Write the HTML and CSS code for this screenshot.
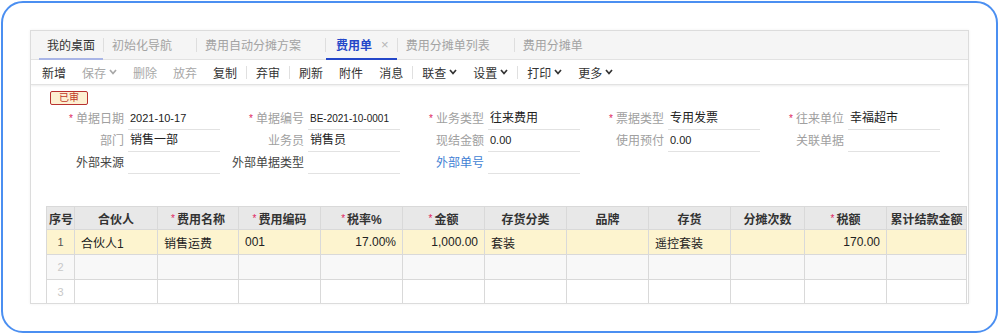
FILE: index.html
```html
<!DOCTYPE html>
<html lang="zh-CN">
<head>
    <meta charset="UTF-8">
    <title>费用单</title>
    <link rel="stylesheet" href="styles.css">
</head>
<body>
<div class="frame">
    <div class="panel">
        <div class="tabs">
            <div class="tab tab-home">我的桌面</div>
            <span class="tab-sep"></span>
            <div class="tab">初始化导航</div>
            <span class="tab-sep"></span>
            <div class="tab">费用自动分摊方案</div>
            <span class="tab-sep"></span>
            <div class="tab tab-active">费用单<span class="tab-close">×</span></div>
            <span class="tab-sep"></span>
            <div class="tab">费用分摊单列表</div>
            <span class="tab-sep"></span>
            <div class="tab">费用分摊单</div>
        </div>

        <div class="toolbar">
            <span class="tool">新增</span>
            <span class="tool off">保存<svg class="caret" width="8" height="6" viewBox="0 0 8 6"><polyline points="1,1 4,4.5 7,1"/></svg></span>
            <span class="tool off">删除</span>
            <span class="tool off">放弃</span>
            <span class="tool">复制</span>
            <span class="tool-sep"></span>
            <span class="tool">弃审</span>
            <span class="tool-sep"></span>
            <span class="tool">刷新</span>
            <span class="tool">附件</span>
            <span class="tool">消息</span>
            <span class="tool-sep"></span>
            <span class="tool">联查<svg class="caret" width="8" height="6" viewBox="0 0 8 6"><polyline points="1,1 4,4.5 7,1"/></svg></span>
            <span class="tool">设置<svg class="caret" width="8" height="6" viewBox="0 0 8 6"><polyline points="1,1 4,4.5 7,1"/></svg></span>
            <span class="tool-sep"></span>
            <span class="tool">打印<svg class="caret" width="8" height="6" viewBox="0 0 8 6"><polyline points="1,1 4,4.5 7,1"/></svg></span>
            <span class="tool">更多<svg class="caret" width="8" height="6" viewBox="0 0 8 6"><polyline points="1,1 4,4.5 7,1"/></svg></span>
        </div>

        <div class="content">
            <div class="badge">已审</div>

            <div class="form">
                <div class="form-row">
                    <div class="field"><label class="req">单据日期</label><div class="input num">2021-10-17</div></div>
                    <div class="field"><label class="req">单据编号</label><div class="input num small">BE-2021-10-0001</div></div>
                    <div class="field"><label class="req">业务类型</label><div class="input">往来费用</div></div>
                    <div class="field"><label class="req">票据类型</label><div class="input">专用发票</div></div>
                    <div class="field"><label class="req">往来单位</label><div class="input">幸福超市</div></div>
                </div>
                <div class="form-row">
                    <div class="field"><label>部门</label><div class="input">销售一部</div></div>
                    <div class="field"><label>业务员</label><div class="input">销售员</div></div>
                    <div class="field"><label>现结金额</label><div class="input num">0.00</div></div>
                    <div class="field"><label>使用预付</label><div class="input num">0.00</div></div>
                    <div class="field"><label>关联单据</label><div class="input"></div></div>
                </div>
                <div class="form-row">
                    <div class="field"><label class="dark">外部来源</label><div class="input"></div></div>
                    <div class="field"><label class="dark">外部单据类型</label><div class="input"></div></div>
                    <div class="field"><label class="link">外部单号</label><div class="input"></div></div>
                </div>
            </div>

            <table class="grid">
                <colgroup>
                    <col style="width:28px"><col style="width:83px"><col style="width:81px"><col style="width:82px">
                    <col style="width:82px"><col style="width:82px"><col style="width:82px"><col style="width:82px">
                    <col style="width:82px"><col style="width:74px"><col style="width:82px"><col style="width:80px">
                </colgroup>
                <thead>
                    <tr>
                        <th>序号</th>
                        <th>合伙人</th>
                        <th><i>*</i>费用名称</th>
                        <th><i>*</i>费用编码</th>
                        <th><i>*</i>税率%</th>
                        <th><i>*</i>金额</th>
                        <th>存货分类</th>
                        <th>品牌</th>
                        <th>存货</th>
                        <th>分摊次数</th>
                        <th><i>*</i>税额</th>
                        <th>累计结款金额</th>
                    </tr>
                </thead>
                <tbody>
                    <tr class="row-sel">
                        <td class="idx">1</td>
                        <td>合伙人1</td>
                        <td>销售运费</td>
                        <td>001</td>
                        <td class="r">17.00%</td>
                        <td class="r">1,000.00</td>
                        <td>套装</td>
                        <td></td>
                        <td>遥控套装</td>
                        <td></td>
                        <td class="r">170.00</td>
                        <td></td>
                    </tr>
                    <tr class="row-alt">
                        <td class="idx">2</td>
                        <td></td><td></td><td></td><td></td><td></td><td></td><td></td><td></td><td></td><td></td><td></td>
                    </tr>
                    <tr>
                        <td class="idx">3</td>
                        <td></td><td></td><td></td><td></td><td></td><td></td><td></td><td></td><td></td><td></td><td></td>
                    </tr>
                </tbody>
            </table>
        </div>
    </div>
</div>
</body>
</html>
```

FILE: styles.css
```css
body {
    margin: 0;
    background: #fff;
    font-family: "Liberation Sans", "Noto Sans CJK SC", sans-serif;
    font-size: 12px;
    color: #333;
}
.frame {
    box-sizing: border-box;
    width: 997px;
    height: 332px;
    margin: 1px 0 0 1px;
    border: 2px solid #4b8ff1;
    border-radius: 22px;
    padding: 27px 0 0 27px;
}
.panel {
    box-sizing: border-box;
    width: 939px;
    height: 274px;
    border: 1px solid #dcdcdc;
    box-shadow: 0 0 3px rgba(0, 0, 0, 0.06);
    overflow: hidden;
}

/* tabs */
.tabs {
    display: flex;
    height: 28px;
    padding-left: 8px;
    background: #f5f5f5;
    border-bottom: 1px solid #e3e3e3;
}
.tab {
    display: flex;
    align-items: center;
    padding: 0 24px 0 8px;
    color: #a3a3a3;
    border-bottom: 2px solid transparent;
    margin-bottom: -1px;
}
.tab-home {
    padding-right: 8px;
    color: #333;
    border-bottom-color: #a9b5e6;
}
.tab-active {
    padding: 0 8px 0 10px;
    color: #2447c9;
    font-weight: bold;
    border-bottom-color: #2447c9;
}
.tab-close {
    margin-left: 9px;
    color: #b5b5b5;
    font-weight: normal;
    font-size: 13px;
}
.tab-sep {
    align-self: center;
    width: 1px;
    height: 14px;
    background: #dedede;
}

/* toolbar */
.toolbar {
    display: flex;
    align-items: center;
    height: 24px;
    padding-left: 3px;
    border-bottom: 1px solid #e2e2e2;
    box-shadow: 0 1px 2px rgba(0, 0, 0, 0.08);
}
.tool {
    display: flex;
    align-items: center;
    padding: 0 8px;
    color: #333;
}
.tool.off {
    color: #a8a8a8;
}
.caret {
    margin-left: 3px;
    fill: none;
    stroke: currentColor;
    stroke-width: 1.7;
}
.tool-sep {
    width: 1px;
    height: 13px;
    margin: 0 1px;
    background: #e0e0e0;
}

/* header form */
.content {
    padding-top: 6px;
}
.badge {
    box-sizing: border-box;
    width: 38px;
    height: 14px;
    margin-left: 19px;
    border: 1px solid #b8312f;
    border-radius: 2px;
    background: #fdf0d2;
    color: #c0392b;
    font-size: 10px;
    line-height: 12px;
    text-align: center;
}
.form {
    margin-top: 3px;
    padding-left: 9px;
}
.form-row {
    display: flex;
    height: 22px;
}
.field {
    display: flex;
    width: 180px;
}
.field label {
    box-sizing: border-box;
    width: 88px;
    padding-right: 4px;
    text-align: right;
    line-height: 22px;
    color: #a0a0a0;
}
.field label.req::before {
    content: "*";
    color: #e0245e;
    font-size: 10px;
    margin-right: 3px;
    vertical-align: 1px;
}
.field label.dark {
    color: #444;
}
.field label.link {
    color: #3f7fd4;
}
.input {
    box-sizing: border-box;
    width: 92px;
    height: 22px;
    padding-left: 2px;
    line-height: 21px;
    border-bottom: 1px solid #e2e2e2;
    color: #222;
}
.input.num {
    font-size: 11px;
}
.input.small {
    font-size: 10px;
}

/* detail grid */
.grid {
    margin: 32px 0 0 15px;
    border-collapse: collapse;
    table-layout: fixed;
    width: 920px;
}
.grid th,
.grid td {
    border: 1px solid #d9d9d9;
    padding: 0 6px;
    white-space: nowrap;
    overflow: hidden;
}
.grid th {
    height: 22px;
    padding: 0 2px;
    background: #e8e8e8;
    font-weight: bold;
    text-align: center;
    color: #333;
}
.grid th i {
    font-style: normal;
    font-weight: normal;
    color: #e0245e;
    font-size: 10px;
    margin-right: 2px;
    vertical-align: 2px;
}
.grid td {
    height: 24px;
    color: #222;
}
.grid td.idx {
    padding: 0;
    text-align: center;
    color: #c8c8c8;
    font-size: 11px;
}
.grid td.r {
    text-align: right;
}
.row-sel td {
    background: #fdf4cf;
}
.row-sel td.idx {
    color: #555;
}
.row-alt td {
    background: #f8f8f8;
}
```
